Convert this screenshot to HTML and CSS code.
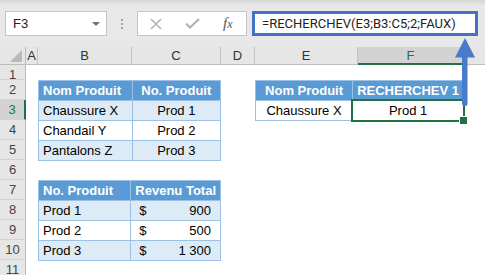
FILE: index.html
```html
<!DOCTYPE html>
<html lang="fr">
<head>
    <meta charset="UTF-8">
    <title>RECHERCHEV</title>
    <link rel="stylesheet" href="styles.css">
</head>
<body>
    <div class="toolbar">
        <div class="namebox">
            <span>F3</span>
            <span class="caret"></span>
        </div>
        <div class="grip"><i></i><i></i><i></i></div>
        <div class="funcs">
            <svg class="ic-x" width="12" height="12" viewBox="0 0 12 12">
                <path d="M1 1 L11 11 M11 1 L1 11" stroke="#b3b3b3" stroke-width="1.6" fill="none"/>
            </svg>
            <svg class="ic-ok" width="15" height="11" viewBox="0 0 15 11">
                <path d="M1 5.5 L5 9.5 L14 1" stroke="#b3b3b3" stroke-width="2.2" fill="none"/>
            </svg>
            <span class="fx">f<small>x</small></span>
        </div>
        <div class="formula">=RECHERCHEV(E3;B3:C5;2;FAUX)</div>
    </div>

    <div class="sheet">
        <div class="corner"></div>
        <div class="colhdr">A</div>
        <div class="colhdr">B</div>
        <div class="colhdr">C</div>
        <div class="colhdr">D</div>
        <div class="colhdr">E</div>
        <div class="colhdr sel">F</div>
        <div class="colhdr last"></div>

        <div class="rowhdr">1</div>
        <div class="rowhdr">2</div>
        <div class="rowhdr sel">3</div>
        <div class="rowhdr">4</div>
        <div class="rowhdr">5</div>
        <div class="rowhdr">6</div>
        <div class="rowhdr">7</div>
        <div class="rowhdr">8</div>
        <div class="rowhdr">9</div>
        <div class="rowhdr">10</div>
        <div class="rowhdr">11</div>

        <!-- B2:C5 -->
        <table class="tbl produits">
            <colgroup><col style="width:94px"><col style="width:89px"></colgroup>
            <tr><th>Nom Produit</th><th class="c">No. Produit</th></tr>
            <tr class="band"><td>Chaussure X</td><td class="c">Prod 1</td></tr>
            <tr><td>Chandail Y</td><td class="c">Prod 2</td></tr>
            <tr class="band"><td>Pantalons Z</td><td class="c">Prod 3</td></tr>
        </table>

        <!-- B7:C10 -->
        <table class="tbl revenus">
            <colgroup><col style="width:94px"><col style="width:89px"></colgroup>
            <tr><th>No. Produit</th><th class="c">Revenu Total</th></tr>
            <tr class="band"><td>Prod 1</td><td class="money"><span class="cur">$</span>900</td></tr>
            <tr><td>Prod 2</td><td class="money"><span class="cur">$</span>500</td></tr>
            <tr class="band"><td>Prod 3</td><td class="money"><span class="cur">$</span>1 300</td></tr>
        </table>

        <!-- E2:F3 -->
        <table class="tbl resultat">
            <colgroup><col style="width:103px"><col style="width:106px"></colgroup>
            <tr><th class="c">Nom Produit</th><th class="c">RECHERCHEV 1</th></tr>
            <tr><td class="c">Chaussure X</td><td class="c active">Prod 1</td></tr>
        </table>
    </div>

    <svg class="arrow" width="485" height="275" viewBox="0 0 485 275">
        <rect x="462" y="54" width="5.5" height="52" rx="2.5" fill="#4a7bcb"/>
        <polygon points="455,57.5 465,38 475,57.5" fill="#4a7bcb"/>
    </svg>
</body>
</html>
```

FILE: styles.css
```css
* {
    margin: 0;
    padding: 0;
    box-sizing: border-box;
}
body {
    width: 485px;
    height: 275px;
    overflow: hidden;
    position: relative;
    background: #fff;
    font-family: "Liberation Sans", Arial, sans-serif;
}

/* barre de formule */
.toolbar {
    height: 47px;
    display: flex;
    align-items: flex-start;
    padding: 11px 0 0 5px;
    background: linear-gradient(#d6d6d6, #e8e8e8 6px, #e8e8e8);
}
.namebox {
    width: 102px;
    height: 25px;
    background: #fff;
    border: 1px solid #c6c6c6;
    display: flex;
    align-items: center;
    justify-content: space-between;
    padding: 0 6px 0 7px;
    font-size: 13px;
    color: #222;
}
.caret {
    width: 0;
    height: 0;
    border-left: 4px solid transparent;
    border-right: 4px solid transparent;
    border-top: 4px solid #707070;
}
.grip {
    width: 30px;
    height: 25px;
    display: flex;
    flex-direction: column;
    align-items: center;
    justify-content: center;
    gap: 2px;
}
.grip i {
    width: 2px;
    height: 2px;
    background: #a0a0a0;
}
.funcs {
    width: 110px;
    height: 25px;
    background: #fff;
    border: 1px solid #c6c6c6;
    display: flex;
    align-items: center;
    padding-left: 12px;
}
.ic-ok {
    margin-left: 23px;
}
.fx {
    margin-left: 23px;
    font-family: "Liberation Serif", serif;
    font-style: italic;
    font-size: 15px;
    color: #555;
}
.fx small {
    font-size: 12px;
}
.formula {
    margin-left: 5px;
    width: 226px;
    height: 25px;
    background: #fff;
    border: 3px solid #4472c4;
    padding-left: 7px;
    font-family: Roboto, "Liberation Sans", sans-serif;
    font-size: 13px;
    line-height: 20px;
    color: #222;
}

/* feuille */
.sheet {
    display: grid;
    grid-template-columns: 26px 12px 94px 89px 34px 103px 106px 1fr;
    grid-template-rows: 18px 15px repeat(10, 20px);
}
.corner {
    background: #e6e6e6;
    border-right: 1px solid #bdbdbd;
    border-bottom: 1px solid #bdbdbd;
    position: relative;
}
.corner::after {
    content: "";
    position: absolute;
    right: 3px;
    bottom: 2px;
    border-left: 12px solid transparent;
    border-bottom: 12px solid #b9b9b9;
}
.colhdr {
    background: #e6e6e6;
    border-right: 1px solid #c4c4c4;
    border-bottom: 1px solid #bdbdbd;
    font-size: 13px;
    line-height: 17px;
    text-align: center;
    color: #333;
}
.colhdr.sel {
    background: #d3d3d3;
    color: #217346;
    border-bottom: 2px solid #217346;
}
.colhdr.last {
    border-right: 0;
}
.rowhdr {
    grid-column: 1;
    background: #e6e6e6;
    border-right: 1px solid #bdbdbd;
    border-bottom: 1px solid #d2d2d2;
    font-size: 13px;
    line-height: 19px;
    text-align: center;
    color: #444;
}
.rowhdr.sel {
    background: #d3d3d3;
    color: #217346;
    border-right: 2px solid #217346;
}

/* tableaux */
.tbl {
    border-collapse: collapse;
    table-layout: fixed;
    font-size: 13px;
    color: #000;
    align-self: start;
}
.produits {
    grid-column: 3 / 5;
    grid-row: 3 / 7;
}
.revenus {
    grid-column: 3 / 5;
    grid-row: 8 / 12;
}
.resultat {
    grid-column: 6 / 8;
    grid-row: 3 / 5;
}
.tbl th,
.tbl td {
    height: 20px;
    border: 1px solid #9bc2e6;
    padding: 1px 4px 0;
    line-height: 18px;
    white-space: nowrap;
    text-align: left;
}
.tbl th {
    background: #5b9bd5;
    color: #fff;
    font-weight: bold;
}
.tbl .c {
    text-align: center;
}
.band td {
    background: #ddebf7;
}
.tbl td.money {
    text-align: right;
    padding: 1px 9px 0 8px;
}
.cur {
    float: left;
}
.tbl td.active {
    position: relative;
}
.tbl td.active::after {
    content: "";
    position: absolute;
    left: -2px;
    top: -2px;
    right: -2px;
    bottom: -2px;
    border: 2px solid #217346;
}
.tbl td.active::before {
    content: "";
    position: absolute;
    right: -5px;
    bottom: -5px;
    width: 7px;
    height: 7px;
    background: #217346;
    border: 1px solid #fff;
    z-index: 1;
}

.arrow {
    position: absolute;
    left: 0;
    top: 0;
    pointer-events: none;
}
```
